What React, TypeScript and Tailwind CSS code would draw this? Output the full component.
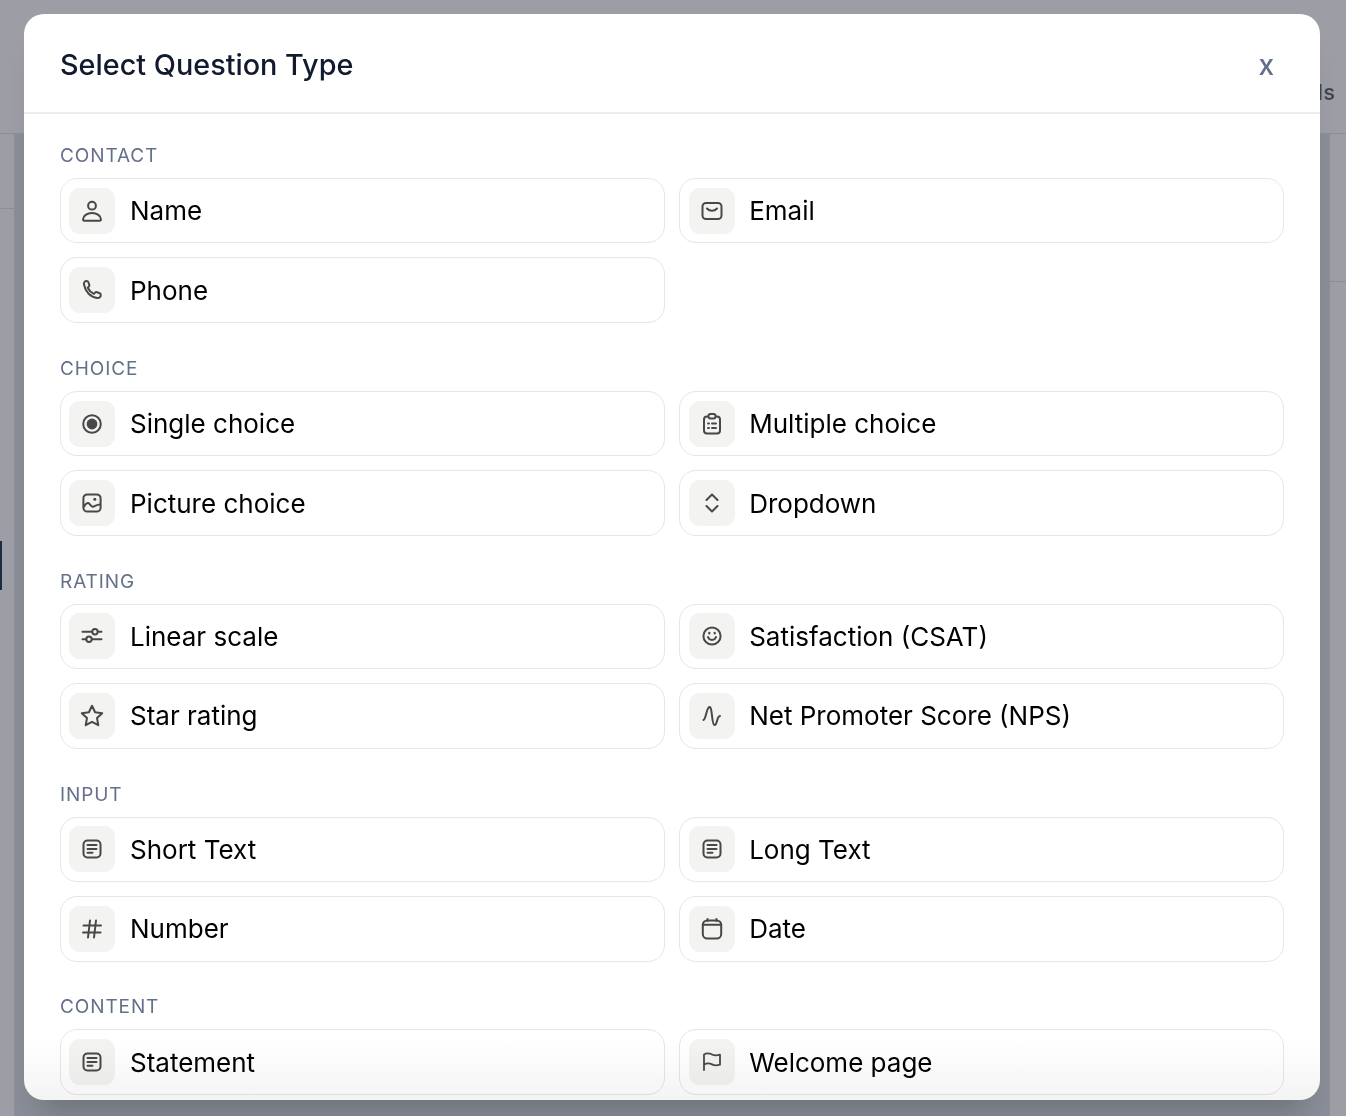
import type { ReactNode } from "react";

const svg = (children: ReactNode) => (
  <svg width="24" height="24" viewBox="0 0 24 24" fill="none" stroke="#484848" strokeWidth="2" strokeLinecap="round" strokeLinejoin="round">
    {children}
  </svg>
);

const icons = {
  user: svg(<><circle cx="12" cy="6.700" r="3.900" /><path d="M3 20.600c0-3.800 4-6.600 9-6.600s9 2.800 9 6.600c0 .7-.4 1.100-1 1.100H4c-.6 0-1-.4-1-1.100Z" /></>),
  mail: svg(<><rect x="2.500" y="4" width="19" height="16" rx="3.500" /><path d="M7 9.500c1.200 1.300 3 2.300 5 2.300s3.800-1 5-2.300" /></>),
  phone: svg(<path d="M4 6.500C3.500 4.500 5 3 6.500 3c1 0 1.700.6 2 1.500l.8 2.300c.2.800 0 1.500-.6 2l-1 .9c1.300 2.700 3.500 4.900 6.200 6.200l1-1.100c.5-.6 1.300-.8 2-.6l2.300.8c.9.300 1.600 1 1.600 2 0 1.800-1.500 3.200-3.400 3C10.500 19.300 5.400 14 4 6.500Z" />),
  radio: svg(<><circle cx="12" cy="12" r="8.800" /><circle cx="12" cy="12" r="5.400" fill="#484848" stroke="none" /></>),
  clipboard: svg(<><rect x="4" y="4.500" width="16" height="17" rx="3" /><rect x="8.500" y="2" width="7" height="4.500" rx="2" fill="#f3f3f2" /><path d="M8 11.500h1M8 16h1M12 11.500h4M12 16h4" /></>),
  image: svg(<><rect x="3.400" y="3.400" width="17.200" height="17.200" rx="4" /><circle cx="14.800" cy="8.200" r="1.500" fill="#484848" stroke="none" /><path d="M4 15.500c1.500-2.500 2.800-3.800 4.300-3.500 1.700.4 2.700 4 4.700 3.800 1.700-.2 3.500-2.300 7-2.300" /></>),
  updown: svg(<path d="m6.500 9 5.500-5.500L17.500 9M6.500 15l5.500 5.500 5.500-5.500" />),
  sliders: svg(<><path d="M2.500 7.700h9.500M17.800 7.700h3.700M2.500 15.300h3.700M12 15.300h9.500" /><circle cx="15" cy="7.700" r="2.700" /><circle cx="9" cy="15.300" r="2.700" /></>),
  smile: svg(<><circle cx="12" cy="12" r="8.600" /><path d="M8 13c.7 1.900 2.200 2.900 4 2.900s3.300-1 4-2.900" /><path d="M9.300 8.800v.6M14.700 8.800v.6" strokeWidth="2.200" /></>),
  star: svg(<path d="m12 1.800 3.100 6.500 7.100.9-5.200 4.900 1.300 7.100-6.300-3.400-6.300 3.400 1.300-7.100-5.200-4.900 7.100-.9Z" />),
  wave: svg(<path d="M3.500 16c2.500-1 3-12.500 6-13 3-.5 2 18 5 18 3 0 2-8.500 5.500-9" />),
  text: svg(<><rect x="3.500" y="3.500" width="17" height="17" rx="4" /><path d="M7.500 8h9M7.500 12h9M7.500 15.800h5" /></>),
  hash: svg(<path d="M3.500 8.500h17.500M3 15.500h17.500M10 3.500 8 20.500M16 3.500 14 20.500" />),
  calendar: svg(<><rect x="2.800" y="3.500" width="18.400" height="18" rx="4.500" /><path d="M2.800 7.800h18.400M7.500 2v2M16.500 2v2" /></>),
  flag: svg(<path d="M4 20V4.500c2.500-1.500 5-1.500 8 0s5 1 8 .2v10c-3 1-5.500 1-8-.3s-5.500-1.200-8 .3" strokeWidth="1.800" />),
};

type IconName = keyof typeof icons;

const sections: { title: string; items: { label: string; icon: IconName }[] }[] = [
  {
    title: "CONTACT",
    items: [
      { label: "Name", icon: "user" },
      { label: "Email", icon: "mail" },
      { label: "Phone", icon: "phone" },
    ],
  },
  {
    title: "CHOICE",
    items: [
      { label: "Single choice", icon: "radio" },
      { label: "Multiple choice", icon: "clipboard" },
      { label: "Picture choice", icon: "image" },
      { label: "Dropdown", icon: "updown" },
    ],
  },
  {
    title: "RATING",
    items: [
      { label: "Linear scale", icon: "sliders" },
      { label: "Satisfaction (CSAT)", icon: "smile" },
      { label: "Star rating", icon: "star" },
      { label: "Net Promoter Score (NPS)", icon: "wave" },
    ],
  },
  {
    title: "INPUT",
    items: [
      { label: "Short Text", icon: "text" },
      { label: "Long Text", icon: "text" },
      { label: "Number", icon: "hash" },
      { label: "Date", icon: "calendar" },
    ],
  },
  {
    title: "CONTENT",
    items: [
      { label: "Statement", icon: "text" },
      { label: "Welcome page", icon: "flag" },
    ],
  },
];

function BackgroundPage() {
  return (
    <div className="flex h-[1116px] flex-col overflow-hidden bg-[#9c9da5]">
      <div className="flex h-[134px] shrink-0 items-start justify-end border-b border-[#8d8f98] pr-[11px] pt-[76px]">
        <span className="text-[22px] font-medium leading-[32px] text-[#3f4450]">ls</span>
      </div>
      <div className="flex flex-1">
        <aside className="flex w-[15px] flex-col border-r border-[#8d8f98]">
          <div className="h-[75px] border-b border-[#8d8f98]" />
          <div className="mt-[332px] h-[49px] w-[2px] bg-[#1e2a44]" />
        </aside>
        <main className="flex-1 bg-[#8a8e98]" />
        <aside className="w-[17px] border-l border-[#8d8f98]">
          <div className="h-[148px] border-b border-[#8d8f98]" />
        </aside>
      </div>
    </div>
  );
}

export default function App() {
  return (
    <div className="relative h-[1116px] overflow-hidden font-['Inter',sans-serif]">
      <BackgroundPage />

      <div className="absolute inset-0 flex items-start justify-start pl-[24px] pt-[14px]">
        <div className="relative flex h-[1086px] w-[1296px] flex-col overflow-hidden rounded-[20px] bg-white shadow-[0_28px_30px_-16px_rgba(0,0,0,0.2)]">
          <div className="flex h-[100px] shrink-0 items-center justify-between border-b-2 border-[#eeebe8] pl-[36px] pr-[46px] pt-[3px]">
            <h2 className="text-[28.8px] font-medium text-[#111a2e]">Select Question Type</h2>
            <button className="text-[28px] font-medium text-[#64708a]">x</button>
          </div>

          <div className="flex flex-col gap-[31.9px] px-[36px] pt-[27.9px]">
            {sections.map((section) => (
              <section key={section.title}>
                <h3 className="mb-[8px] text-[19px] leading-[28px] tracking-[0.9px] text-[#64708a]">{section.title}</h3>
                <div className="grid grid-cols-2 gap-x-[14.4px] gap-y-[14px]">
                  {section.items.map((item) => (
                    <button
                      key={item.label}
                      className="flex h-[65.5px] items-center gap-[14.6px] rounded-[17px] border border-[#e6e6e6] bg-white pl-[8.4px] text-left text-[26px] text-black"
                    >
                      <span className="flex h-[46px] w-[46px] shrink-0 items-center justify-center rounded-[11px] bg-[#f3f3f2]">
                        {icons[item.icon]}
                      </span>
                      {item.label}
                    </button>
                  ))}
                </div>
              </section>
            ))}
          </div>

          <div className="pointer-events-none absolute inset-x-0 bottom-0 h-[60px] bg-gradient-to-b from-white to-[#f4f4f4] mix-blend-multiply" />
        </div>
      </div>
    </div>
  );
}
